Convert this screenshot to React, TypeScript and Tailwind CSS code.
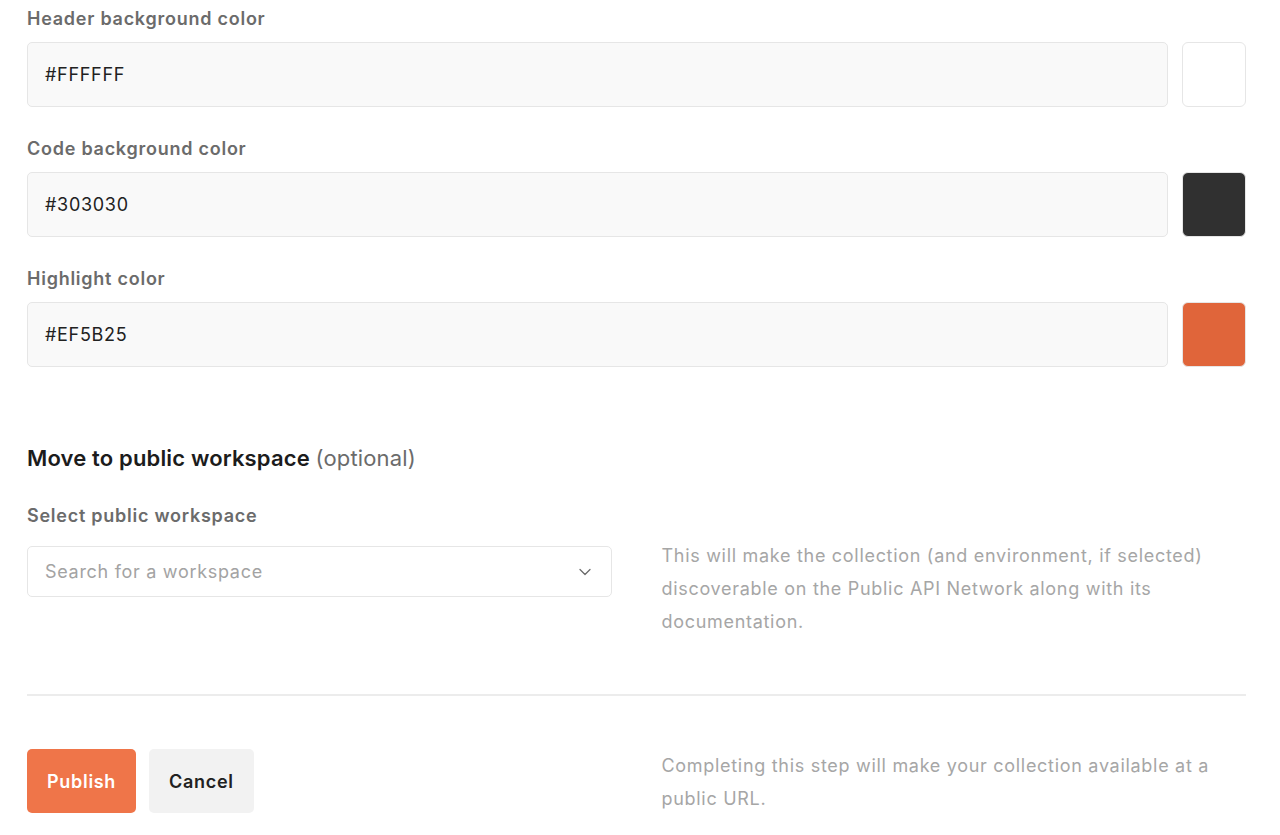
import { ChevronDown } from "lucide-react";

const colorFields = [
    { label: "Header background color", value: "#FFFFFF", swatch: "bg-[#ffffff]" },
    { label: "Code background color", value: "#303030", swatch: "bg-[#303030]" },
    { label: "Highlight color", value: "#EF5B25", swatch: "bg-[#e0653a]" },
];

const ColorField = ({ label, value, swatch }: { label: string; value: string; swatch: string }) => (
    <div className="flex flex-col">
        <label className="text-[18px] leading-[28px] tracking-[0.75px] font-semibold text-[#6b6b6b] mb-[9px]">
            {label}
        </label>
        <div className="flex gap-[14px]">
            <div className="flex-1 h-[65px] flex items-center px-[17px] bg-[#f9f9f9] border border-[#e6e6e6] rounded-[5px] text-[18px] tracking-[0.7px] text-[#212121]">
                {value}
            </div>
            <div className={`w-[64px] h-[65px] rounded-[6px] border border-[#e6e6e6] ${swatch}`}></div>
        </div>
    </div>
);

const App = () => {
    return (
        <div className="w-[1280px] h-[835px] overflow-hidden bg-white font-['Inter',sans-serif]">
            <div className="w-[1219px] ml-[27px] pt-[5px] flex flex-col">
                <div className="flex flex-col gap-[28px]">
                    {colorFields.map((f) => (
                        <ColorField key={f.label} {...f} />
                    ))}
                </div>

                <h2 className="mt-[75px] text-[22px] leading-[32px] tracking-[0.15px] font-semibold text-[#1c1c1c]">
                    Move to public workspace <span className="font-normal text-[#6b6b6b]">(optional)</span>
                </h2>
                <label className="mt-[28px] text-[18px] leading-[28px] tracking-[0.75px] font-semibold text-[#6b6b6b]">
                    Select public workspace
                </label>
                <div className="grid grid-cols-2 gap-[50px] mt-[9px]">
                    <div className="pt-[7px]">
                        <div className="h-[51px] flex items-center justify-between pl-[17px] pr-[16px] bg-white border border-[#e6e6e6] rounded-[5px]">
                            <span className="text-[18px] tracking-[0.7px] text-[#a3a3a3]">Search for a workspace</span>
                            <ChevronDown size={20} strokeWidth={1.5} className="text-[#6b6b6b]" />
                        </div>
                    </div>
                    <p className="text-[18px] leading-[33px] tracking-[0.7px] text-[#a6a6a6]">
                        This will make the collection (and environment, if selected) discoverable on the Public API
                        Network along with its documentation.
                    </p>
                </div>

                <div className="mt-[56px] border-t-2 border-[#ececec]"></div>

                <div className="grid grid-cols-2 gap-[50px] mt-[53px]">
                    <div className="flex gap-[13px]">
                        <button className="h-[64px] px-5 rounded-[5px] bg-[#ef7549] text-white text-[18px] tracking-[0.7px] font-semibold">
                            Publish
                        </button>
                        <button className="h-[64px] px-5 rounded-[5px] bg-[#f2f2f2] text-[#212121] text-[18px] tracking-[0.7px] font-semibold">
                            Cancel
                        </button>
                    </div>
                    <p className="text-[18px] leading-[33px] tracking-[0.7px] text-[#a6a6a6]">
                        Completing this step will make your collection available at a public URL.
                    </p>
                </div>
            </div>
        </div>
    );
};

export default App;
